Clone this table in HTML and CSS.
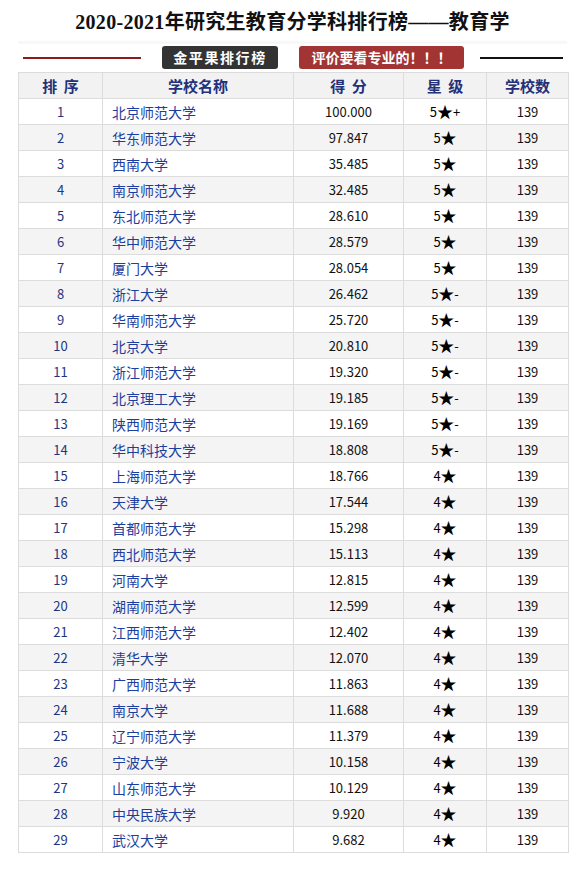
FILE: index.html
```html
<!DOCTYPE html>
<html lang="zh">
<head>
<meta charset="utf-8">
<title>2020-2021年研究生教育分学科排行榜——教育学</title>
<link rel="stylesheet" href="styles.css">
</head>
<body>
<div class="page">
  <h1 class="title">2020-2021年研究生教育分学科排行榜——教育学</h1>
  <div class="banner">
    <span class="line line-red"></span>
    <span class="badge badge-dark">金平果排行榜</span>
    <span class="badge badge-red">评价要看专业的！！！</span>
    <span class="line line-black"></span>
  </div>
  <table class="rank">
    <colgroup>
      <col class="c1"><col class="c2"><col class="c3"><col class="c4"><col class="c5">
    </colgroup>
    <thead>
      <tr><th>排&nbsp;序</th><th>学校名称</th><th>得&nbsp;分</th><th>星&nbsp;级</th><th>学校数</th></tr>
    </thead>
    <tbody>
      <tr><td class="no">1</td><td class="name">北京师范大学</td><td class="num">100.000</td><td class="star">5<span class="s">★</span>+</td><td class="num">139</td></tr>
      <tr><td class="no">2</td><td class="name">华东师范大学</td><td class="num">97.847</td><td class="star">5<span class="s">★</span></td><td class="num">139</td></tr>
      <tr><td class="no">3</td><td class="name">西南大学</td><td class="num">35.485</td><td class="star">5<span class="s">★</span></td><td class="num">139</td></tr>
      <tr><td class="no">4</td><td class="name">南京师范大学</td><td class="num">32.485</td><td class="star">5<span class="s">★</span></td><td class="num">139</td></tr>
      <tr><td class="no">5</td><td class="name">东北师范大学</td><td class="num">28.610</td><td class="star">5<span class="s">★</span></td><td class="num">139</td></tr>
      <tr><td class="no">6</td><td class="name">华中师范大学</td><td class="num">28.579</td><td class="star">5<span class="s">★</span></td><td class="num">139</td></tr>
      <tr><td class="no">7</td><td class="name">厦门大学</td><td class="num">28.054</td><td class="star">5<span class="s">★</span></td><td class="num">139</td></tr>
      <tr><td class="no">8</td><td class="name">浙江大学</td><td class="num">26.462</td><td class="star">5<span class="s">★</span>-</td><td class="num">139</td></tr>
      <tr><td class="no">9</td><td class="name">华南师范大学</td><td class="num">25.720</td><td class="star">5<span class="s">★</span>-</td><td class="num">139</td></tr>
      <tr><td class="no">10</td><td class="name">北京大学</td><td class="num">20.810</td><td class="star">5<span class="s">★</span>-</td><td class="num">139</td></tr>
      <tr><td class="no">11</td><td class="name">浙江师范大学</td><td class="num">19.320</td><td class="star">5<span class="s">★</span>-</td><td class="num">139</td></tr>
      <tr><td class="no">12</td><td class="name">北京理工大学</td><td class="num">19.185</td><td class="star">5<span class="s">★</span>-</td><td class="num">139</td></tr>
      <tr><td class="no">13</td><td class="name">陕西师范大学</td><td class="num">19.169</td><td class="star">5<span class="s">★</span>-</td><td class="num">139</td></tr>
      <tr><td class="no">14</td><td class="name">华中科技大学</td><td class="num">18.808</td><td class="star">5<span class="s">★</span>-</td><td class="num">139</td></tr>
      <tr><td class="no">15</td><td class="name">上海师范大学</td><td class="num">18.766</td><td class="star">4<span class="s">★</span></td><td class="num">139</td></tr>
      <tr><td class="no">16</td><td class="name">天津大学</td><td class="num">17.544</td><td class="star">4<span class="s">★</span></td><td class="num">139</td></tr>
      <tr><td class="no">17</td><td class="name">首都师范大学</td><td class="num">15.298</td><td class="star">4<span class="s">★</span></td><td class="num">139</td></tr>
      <tr><td class="no">18</td><td class="name">西北师范大学</td><td class="num">15.113</td><td class="star">4<span class="s">★</span></td><td class="num">139</td></tr>
      <tr><td class="no">19</td><td class="name">河南大学</td><td class="num">12.815</td><td class="star">4<span class="s">★</span></td><td class="num">139</td></tr>
      <tr><td class="no">20</td><td class="name">湖南师范大学</td><td class="num">12.599</td><td class="star">4<span class="s">★</span></td><td class="num">139</td></tr>
      <tr><td class="no">21</td><td class="name">江西师范大学</td><td class="num">12.402</td><td class="star">4<span class="s">★</span></td><td class="num">139</td></tr>
      <tr><td class="no">22</td><td class="name">清华大学</td><td class="num">12.070</td><td class="star">4<span class="s">★</span></td><td class="num">139</td></tr>
      <tr><td class="no">23</td><td class="name">广西师范大学</td><td class="num">11.863</td><td class="star">4<span class="s">★</span></td><td class="num">139</td></tr>
      <tr><td class="no">24</td><td class="name">南京大学</td><td class="num">11.688</td><td class="star">4<span class="s">★</span></td><td class="num">139</td></tr>
      <tr><td class="no">25</td><td class="name">辽宁师范大学</td><td class="num">11.379</td><td class="star">4<span class="s">★</span></td><td class="num">139</td></tr>
      <tr><td class="no">26</td><td class="name">宁波大学</td><td class="num">10.158</td><td class="star">4<span class="s">★</span></td><td class="num">139</td></tr>
      <tr><td class="no">27</td><td class="name">山东师范大学</td><td class="num">10.129</td><td class="star">4<span class="s">★</span></td><td class="num">139</td></tr>
      <tr><td class="no">28</td><td class="name">中央民族大学</td><td class="num">9.920</td><td class="star">4<span class="s">★</span></td><td class="num">139</td></tr>
      <tr><td class="no">29</td><td class="name">武汉大学</td><td class="num">9.682</td><td class="star">4<span class="s">★</span></td><td class="num">139</td></tr>
    </tbody>
  </table>
</div>
</body>
</html>
```
FILE: styles.css
```css
html, body {
  margin: 0;
  padding: 0;
  background: #fff;
}
body {
  font-family: "Noto Sans CJK SC", "Liberation Sans", sans-serif;
  color: #000;
}
.page {
  width: 549px;
  margin: 0 0 0 18px;
}
.title {
  margin: 0;
  height: 44px;
  padding-top: 9px;
  box-sizing: border-box;
  font-family: "Liberation Serif", "Noto Sans CJK SC", serif;
  font-size: 20px;
  line-height: 26px;
  font-weight: 700;
  text-align: center;
  letter-spacing: 0.3px;
  color: #111;
  background: linear-gradient(to bottom, #fff 0, #fff 40px, #f4f4f4 43px, #fff 44px);
}
.banner {
  display: flex;
  align-items: center;
  height: 23px;
  margin-top: 2px;
  margin-bottom: 3px;
}
.line {
  height: 2px;
  display: block;
}
.line-red {
  width: 118px;
  margin-left: 5px;
  background: #8e1b1b;
}
.line-black {
  width: 83px;
  margin-left: 16px;
  background: #111;
}
.badge {
  height: 23px;
  line-height: 23px;
  border-radius: 3px;
  color: #fff;
  font-weight: 700;
  font-size: 14px;
  text-align: center;
  box-sizing: border-box;
}
.badge-dark {
  width: 116px;
  margin-left: 21px;
  background: #333;
  letter-spacing: 1.6px;
}
.badge-red {
  width: 165px;
  margin-left: 21px;
  background: #a23434;
  letter-spacing: 0;
}
.rank {
  width: 550px;
  border-collapse: collapse;
  table-layout: fixed;
  font-size: 14px;
}
.c1 { width: 84px; }
.c2 { width: 191px; }
.c3 { width: 110px; }
.c4 { width: 83px; }
.c5 { width: 82px; }
.rank th, .rank td {
  border: 1px solid #dcdcdc;
  height: 25px;
  padding: 0;
  line-height: 24px;
  text-align: center;
}
.rank th {
  background: #f2f2f2;
  color: #23307a;
  font-weight: 700;
  font-size: 15px;
  word-spacing: 3px;
}
.rank tbody tr:nth-child(even) td {
  background: #f4f4f4;
}
.rank td.no {
  color: #1d3680;
  font-size: 13px;
}
.rank td.name {
  text-align: left;
  padding-left: 9px;
  color: #1c3ea0;
}
.rank td.num {
  font-size: 13px;
  color: #111;
}
.rank td.star {
  font-size: 13px;
  color: #000;
}
.rank td.star .s {
  font-family: "Noto Sans CJK SC", sans-serif;
  font-size: 16px;
  line-height: 0;
  vertical-align: -1px;
}
```
